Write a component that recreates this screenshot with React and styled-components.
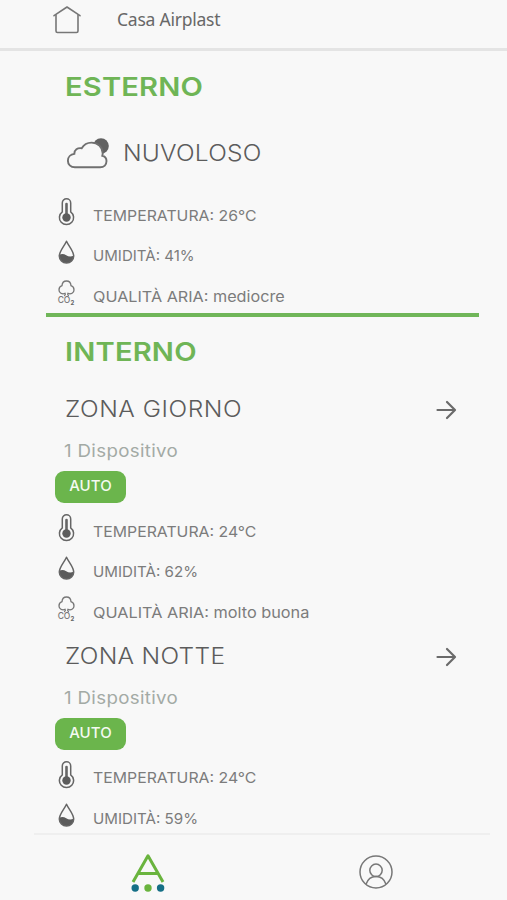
import styled, { createGlobalStyle } from 'styled-components'

const GlobalStyle = createGlobalStyle`
    * {
        box-sizing: border-box;
    }
    body {
        margin: 0;
        background: #f8f8f8;
    }
`

const Screen = styled.div`
    display: flex;
    flex-direction: column;
    width: 507px;
    height: 900px;
    overflow: hidden;
    background: #f8f8f8;
    color: #6f6f6f;
    font-family: 'Inter', sans-serif;
    svg {
        display: block;
        flex: none;
        overflow: visible;
    }
`

const Header = styled.header`
    display: flex;
    flex: none;
    align-items: center;
    gap: 36px;
    height: 51px;
    padding: 0 0 8px 53px;
    border-bottom: 3px solid #e4e4e4;
`

const HouseName = styled.h1`
    margin: -2px 0 0;
    font-family: 'Noto Sans', sans-serif;
    font-size: 17.5px;
    font-weight: 400;
    line-height: 40px;
    letter-spacing: -0.23px;
    color: #686868;
`

const Content = styled.main`
    flex: 1;
    min-height: 0;
    overflow: hidden;
    padding: 16px 28px 0 46px;
`

const SectionTitle = styled.h2`
    margin: 0 0 0 19px;
    font-size: 26px;
    font-weight: 600;
    line-height: 40px;
    letter-spacing: 0.15px;
    transform: scaleX(1.12);
    transform-origin: left;
    color: #6fb556;
`

const Weather = styled.div`
    display: flex;
    align-items: center;
    gap: 14px;
    height: 40px;
    margin: 26.3px 0 22.4px 21px;
`

const BigLabel = styled.h3`
    margin: 0;
    font-size: 22.3px;
    font-weight: 300;
    line-height: 40px;
    letter-spacing: ${({ $spacing }) => $spacing};
    transform: scaleX(1.1);
    transform-origin: left;
    color: #5c5c5c;
`

const Readings = styled.ul`
    margin: 0;
    padding: 0;
    list-style: none;
`

const Reading = styled.li`
    display: flex;
    gap: 16.5px;
    height: 40.5px;
    padding-left: 11px;
`

const ReadingIcon = styled.span`
    display: flex;
    align-items: center;
    justify-content: center;
    width: 19px;
    height: 32.5px;
`

const ReadingText = styled.span`
    font-size: 15px;
    line-height: 40.5px;
    white-space: nowrap;
    transform: scaleX(${({ $stretch }) => $stretch});
    transform-origin: left;
    color: #7c7c7c;
`

const Divider = styled.hr`
    width: 433px;
    height: 4px;
    margin: -4.5px 0 15px;
    border: 0;
    background: #70b659;
`

const ZoneBlock = styled.section`
    margin-top: ${({ $top }) => $top};
`

const ZoneHead = styled.div`
    display: flex;
    align-items: center;
    justify-content: space-between;
    padding: 0 22px 0 19px;
`

const Devices = styled.p`
    margin: 12.5px 0 10px 18px;
    font-size: 17px;
    line-height: 20px;
    letter-spacing: 0.3px;
    transform: scaleX(1.1);
    transform-origin: left;
    color: #a3aaa5;
`

const ModeButton = styled.button`
    display: block;
    width: 71px;
    height: 31.5px;
    margin: 0 0 8.7px 9px;
    padding: 0 0 3px;
    border: 0;
    border-radius: 9px;
    background: #6bb54c;
    color: #f4faf1;
    font-family: inherit;
    font-size: 15px;
    font-weight: 500;
    letter-spacing: 0.1px;
`

const BottomNav = styled.nav`
    display: grid;
    flex: none;
    grid-template-columns: 228px 228px;
    justify-items: center;
    height: 67px;
    margin: 0 17px 0 34px;
    border-top: 2px solid #efefef;
`

const NavItem = styled.a`
    padding-top: ${({ $top }) => $top};
`

function HouseIcon() {
    return (
        <svg width="28" height="28" viewBox="0 0 28 28" fill="none" stroke="#777" strokeWidth="1.6" strokeLinejoin="round" strokeLinecap="round">
            <path d="M1 9.7 14 1l13 8.7" />
            <path d="M3 9v16c0 1 .6 1.5 1.5 1.5h19c.9 0 1.5-.5 1.5-1.5V9" />
        </svg>
    )
}

function CloudIcon() {
    return (
        <svg width="42" height="32" viewBox="0 0 42 32">
            <circle cx="34" cy="9" r="7.8" fill="#626262" />
            <path
                d="M8 30.300C3.500 30.300.9 27.300.9 23.700c0-3.500 2.700-6.300 6.400-6.800C7.300 13 10.500 10.500 14.700 11.300C16.800 7.600 20.300 5.600 24.500 5.600c6.300 0 11 4.500 11.200 10.600c0 1-.2 1.800-.4 2.500c2.600.6 4.200 2.700 4.200 5.300c0 3.600-2.500 6.300-6.300 6.300z"
                fill="#f8f8f8"
                stroke="#707070"
                strokeWidth="1.9"
            />
        </svg>
    )
}

function ThermometerIcon() {
    return (
        <svg width="17" height="28" viewBox="0 0 17 28" fill="none" stroke="#666">
            <path d="M4.300 13.800V5a4.200 4.200 0 0 1 8.400 0v8.800a7.100 7.100 0 1 1-8.400 0z" strokeWidth="1.5" />
            <path d="M8.500 6v13" strokeWidth="2.6" strokeLinecap="round" />
            <circle cx="8.5" cy="19.5" r="4.2" fill="#5c5c5c" stroke="none" />
        </svg>
    )
}

function DropIcon() {
    return (
        <svg width="17" height="24" viewBox="0 0 17 24">
            <path d="M1.200 14.800c2.600-1.500 4.800-1 7 .4c2.400 1.500 5 1.600 7.700.2c-.2 4.600-3.200 7.600-7.400 7.600s-7.100-3.300-7.300-8.200z" fill="#5c5c5c" />
            <path d="M8.500 1.200C6.500 5.800 1.300 11 1.300 16c0 4.100 3.200 7 7.200 7s7.200-2.900 7.200-7c0-5-5.200-10.200-7.200-14.800z" fill="none" stroke="#666" strokeWidth="1.5" strokeLinejoin="round" />
        </svg>
    )
}

function Co2Icon() {
    return (
        <svg width="17" height="25" viewBox="0 0 17 25">
            <path
                d="M6.200 16c1.100-.8 1.400-1.700.9-2.600C4 14.600 1 12.900 1 9.900C1 7.800 2.200 6.200 4 5.700C4.200 2.800 6 1 8.500 1s4.300 1.800 4.500 4.700c1.800.5 3 2.100 3 4.200c0 3-3 4.700-6.100 3.500c-.5.9-.2 1.800.9 2.600"
                fill="none"
                stroke="#777"
                strokeWidth="1.3"
            />
            <text x="-0.3" y="23.3" fontFamily="Inter, sans-serif" fontSize="8.5" fontWeight="500" fill="#777" textLength="12.5">CO</text>
            <text x="12.6" y="24.7" fontFamily="Inter, sans-serif" fontSize="6" fontWeight="700" fill="#666">2</text>
        </svg>
    )
}

function ArrowIcon() {
    return (
        <svg width="21" height="20" viewBox="0 0 21 20" fill="none" stroke="#6a6a6a" strokeWidth="2.2" strokeLinecap="round" strokeLinejoin="round">
            <path d="M1.500 11h17.300M11 3l8 8-8 8" />
        </svg>
    )
}

function LogoIcon() {
    return (
        <svg width="34" height="38" viewBox="0 0 34 38">
            <path d="M2 28 17 1.800 32 28M7.500 19.500h19" fill="none" stroke="#6ab43e" strokeWidth="3" strokeLinejoin="round" />
            <circle cx="4.200" cy="34" r="3.7" fill="#156f86" />
            <circle cx="17" cy="34" r="3.7" fill="#6ab43e" />
            <circle cx="29.6" cy="34" r="3.7" fill="#156f86" />
        </svg>
    )
}

function UserIcon() {
    return (
        <svg width="34" height="34" viewBox="0 0 34 34" fill="none" stroke="#777" strokeWidth="1.5">
            <circle cx="17" cy="17" r="16" />
            <circle cx="17" cy="15.3" r="6.2" />
            <path d="M7 29.300c1.500-4.600 5.300-7.800 10-7.800s8.500 3.200 10 7.800" />
        </svg>
    )
}

const icons = { temp: ThermometerIcon, hum: DropIcon, air: Co2Icon }

const outside = [
    { icon: 'temp', text: 'TEMPERATURA: 26°C', stretch: 1.055 },
    { icon: 'hum', text: 'UMIDITÀ: 41%', stretch: 1.005 },
    { icon: 'air', text: 'QUALITÀ ARIA: mediocre', stretch: 1.08 },
]

const zones = [
    {
        name: 'ZONA GIORNO',
        spacing: '0.5px',
        top: '17.2px',
        readings: [
            { icon: 'temp', text: 'TEMPERATURA: 24°C', stretch: 1.055 },
            { icon: 'hum', text: 'UMIDITÀ: 62%', stretch: 1.01 },
            { icon: 'air', text: 'QUALITÀ ARIA: molto buona', stretch: 1.085 },
        ],
    },
    {
        name: 'ZONA NOTTE',
        spacing: '0.28px',
        top: '2.5px',
        readings: [
            { icon: 'temp', text: 'TEMPERATURA: 24°C', stretch: 1.055 },
            { icon: 'hum', text: 'UMIDITÀ: 59%', stretch: 1.01 },
        ],
    },
]

function ReadingList({ items }) {
    return (
        <Readings>
            {items.map(({ icon, text, stretch }) => {
                const Icon = icons[icon]
                return (
                    <Reading key={text}>
                        <ReadingIcon><Icon /></ReadingIcon>
                        <ReadingText $stretch={stretch}>{text}</ReadingText>
                    </Reading>
                )
            })}
        </Readings>
    )
}

function Zone({ zone }) {
    return (
        <ZoneBlock $top={zone.top}>
            <ZoneHead>
                <BigLabel $spacing={zone.spacing}>{zone.name}</BigLabel>
                <ArrowIcon />
            </ZoneHead>
            <Devices>1 Dispositivo</Devices>
            <ModeButton>AUTO</ModeButton>
            <ReadingList items={zone.readings} />
        </ZoneBlock>
    )
}

function App() {
    return (
        <>
            <GlobalStyle />
            <Screen>
                <Header>
                    <HouseIcon />
                    <HouseName>Casa Airplast</HouseName>
                </Header>
                <Content>
                    <SectionTitle>ESTERNO</SectionTitle>
                    <Weather>
                        <CloudIcon />
                        <BigLabel $spacing="0.2px">NUVOLOSO</BigLabel>
                    </Weather>
                    <ReadingList items={outside} />
                    <Divider />
                    <SectionTitle>INTERNO</SectionTitle>
                    {zones.map((zone) => (
                        <Zone key={zone.name} zone={zone} />
                    ))}
                </Content>
                <BottomNav>
                    <NavItem $top="19px"><LogoIcon /></NavItem>
                    <NavItem $top="20px"><UserIcon /></NavItem>
                </BottomNav>
            </Screen>
        </>
    )
}

export default App
